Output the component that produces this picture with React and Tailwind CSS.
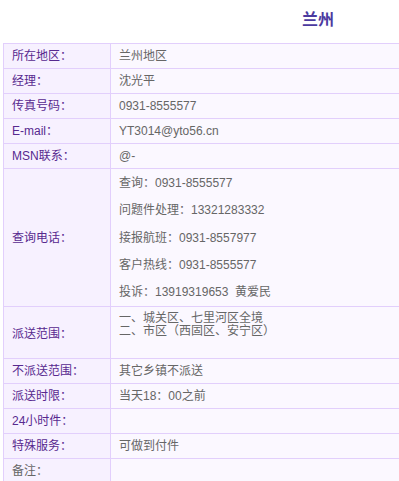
export default function App() {
  const B = "border-[#e2cffc]";
  const rows = [
    ["所在地区：", "兰州地区"],
    ["经理：", "沈光平"],
    ["传真号码：", "0931-8555577"],
    ["E-mail：", "YT3014@yto56.cn"],
    ["MSN联系：", "@-"],
  ];
  const rows2 = [
    ["不派送范围：", "其它乡镇不派送"],
    ["派送时限：", "当天18：00之前"],
    ["24小时件：", ""],
    ["特殊服务：", "可做到付件"],
  ];
  const query = [
    "查询：0931-8555577",
    "问题件处理：13321283332",
    "接报航班：0931-8557977",
    "客户热线：0931-8555577",
    "投诉：13919319653\u00a0 黄爱民",
  ];
  const Row = ({ l, v }) => (
    <div className={`flex h-[25px] border-b ${B}`}>
      <div className={`w-[107px] shrink-0 border-r ${B} bg-[#f7f1ff] pl-[8px] flex items-center text-[#57298f]`}>{l}</div>
      <div className="flex-1 bg-[#fbf8ff] pl-[8px] flex items-center text-[#666666]">{v}</div>
    </div>
  );
  return (
    <div className="w-[399px] h-[481px] overflow-hidden bg-white text-[12px] leading-[14px]" style={{ fontFamily: '"Liberation Sans", "Noto Sans CJK SC", sans-serif' }}>
      <div className="h-[43px] flex items-center pl-[302px] pb-[3px]">
        <span className="text-[16px] font-bold text-[#4b3a9f]">兰州</span>
      </div>
      <div className={`ml-[3px] w-[640px] border-l border-t ${B}`}>
        {rows.map(([l, v]) => <Row key={l} l={l} v={v} />)}
        <div className={`flex h-[138px] border-b ${B}`}>
          <div className={`w-[107px] shrink-0 border-r ${B} bg-[#f7f1ff] pl-[8px] flex items-center text-[#57298f]`}>查询电话：</div>
          <div className="flex-1 bg-[#fbf8ff] pl-[8px] text-[#666666] flex flex-col">
            {query.map((q) => (
              <div key={q} className="h-[27.5px] flex items-center">{q}</div>
            ))}
          </div>
        </div>
        <div className={`flex h-[52px] border-b ${B}`}>
          <div className={`w-[107px] shrink-0 border-r ${B} bg-[#f7f1ff] pl-[8px] flex items-center pt-[2px] text-[#57298f]`}>派送范围：</div>
          <div className="flex-1 bg-[#fbf8ff] pl-[8px] pt-[5px] text-[#666666] leading-[13px]">
            <div>一、城关区、七里河区全境</div>
            <div>二、市区（西固区、安宁区）</div>
          </div>
        </div>
        {rows2.map(([l, v]) => <Row key={l} l={l} v={v} />)}
        <div className={`flex h-[25px] border-b ${B}`}>
          <div className={`w-[107px] shrink-0 border-r ${B} bg-[#f7f1ff] pl-[8px] flex items-center text-[#666666]`}>备注：</div>
          <div className="flex-1 bg-[#fbf8ff] pl-[8px] flex items-center text-[#666666]"></div>
        </div>
      </div>
    </div>
  );
}
